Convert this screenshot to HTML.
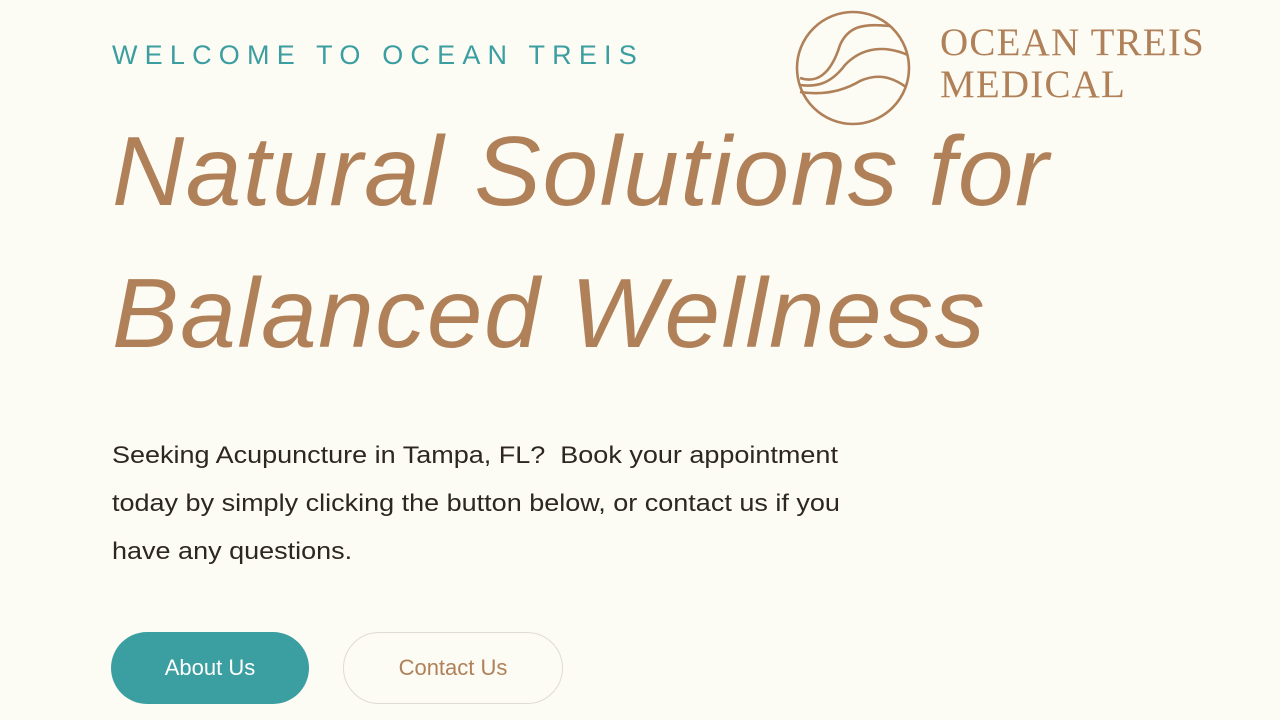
<!DOCTYPE html>
<html><head><style>
body{margin:0;width:1280px;height:720px;background:#fcfbf4;position:relative;overflow:hidden;font-family:"Liberation Sans",sans-serif}
.w{position:absolute;left:112px;top:40px;color:#3b9ea0;font-size:27px;letter-spacing:7.2px}
h1{position:absolute;left:112px;top:100px;margin:0;font-family:"Liberation Sans",sans-serif;font-weight:normal;font-style:italic;font-size:98px;line-height:142px;color:#b08159;letter-spacing:1.5px;transform:scaleX(1.02);transform-origin:left;white-space:nowrap}
p{position:absolute;left:112px;top:432px;margin:0;font-size:24px;line-height:48px;color:#2e2620;width:700px;transform:scaleX(1.125);transform-origin:left;white-space:nowrap}
.b{position:absolute;top:632px;height:72px;border-radius:36px;box-sizing:border-box;font-size:22px;display:flex;align-items:center;justify-content:center}
.logo{position:absolute;left:940px;top:22px;color:#b08159;font-family:"Liberation Serif",serif;font-size:39px;line-height:42px;letter-spacing:1.2px}
</style></head><body>
<div class="w">WELCOME TO OCEAN TREIS</div>
<svg style="position:absolute;left:790px;top:5px" width="130" height="125" viewBox="0 0 130 125" fill="none" stroke="#b08159" stroke-width="2.6">
<circle cx="63" cy="63" r="56"/>
<path d="M10 73 C25 78 40 72 50 40 C58 22 72 18 100 21"/>
<path d="M10 80 C25 82 40 80 55 60 C72 42 95 40 118 50"/>
<path d="M10 87 C30 90 50 88 70 76 C88 68 102 72 116 82"/>
</svg>
<div class="logo">OCEAN TREIS<br>MEDICAL</div>
<h1>Natural Solutions for<br>Balanced Wellness</h1>
<p>Seeking Acupuncture in Tampa, FL?&nbsp; Book your appointment<br>today by simply clicking the button below, or contact us if you<br>have any questions.</p>
<div class="b" style="left:111px;width:198px;background:#3b9ea0;color:#fff">About Us</div>
<div class="b" style="left:343px;width:220px;border:1.5px solid #e0dcd2;color:#b08159">Contact Us</div>
</body></html>
